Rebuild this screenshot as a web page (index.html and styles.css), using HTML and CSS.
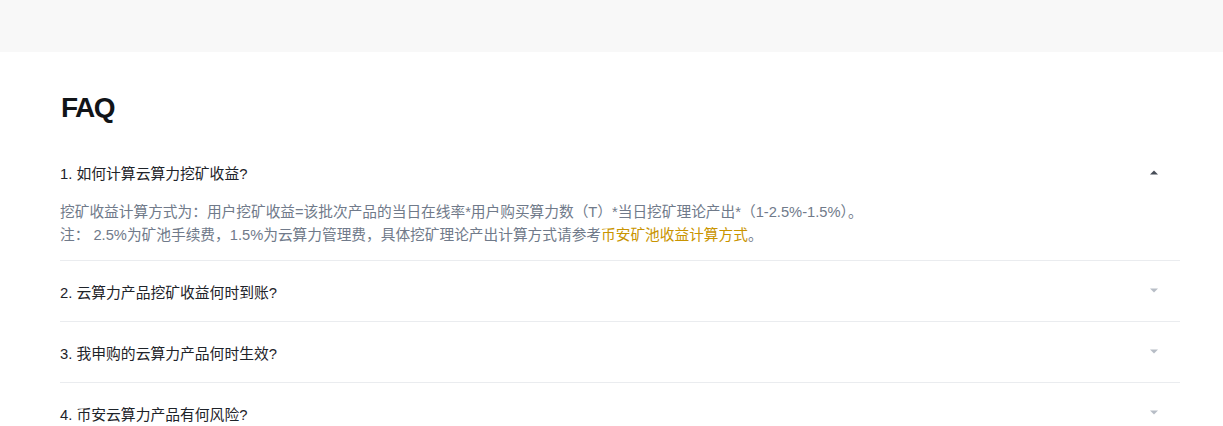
FILE: index.html
```html
<!DOCTYPE html>
<html lang="zh-CN">
<head>
  <meta charset="UTF-8">
  <title>FAQ</title>
  <link rel="stylesheet" href="styles.css">
</head>
<body>

  <div class="top-band"></div>

  <main class="faq">
    <h1>FAQ</h1>

    <div class="faq-item open">
      <div class="faq-question">
        <span>1. 如何计算云算力挖矿收益?</span>
        <svg class="caret" width="10" height="6" viewBox="0 0 10 6"><path d="M1 5.5 L5 1.5 L9 5.5 Z" fill="#474d57"/></svg>
      </div>
      <div class="faq-answer">
        <p>挖矿收益计算方式为：用户挖矿收益=该批次产品的当日在线率*用户购买算力数（T）*当日挖矿理论产出*（1-2.5%-1.5%）。</p>
        <p>注： 2.5%为矿池手续费，1.5%为云算力管理费，具体挖矿理论产出计算方式请参考<a href="#">币安矿池收益计算方式</a>。</p>
      </div>
    </div>

    <div class="faq-item">
      <div class="faq-question">
        <span>2. 云算力产品挖矿收益何时到账?</span>
        <svg class="caret" width="10" height="6" viewBox="0 0 10 6"><path d="M1 0.5 L5 4.5 L9 0.5 Z" fill="#b7bdc6"/></svg>
      </div>
    </div>

    <div class="faq-item">
      <div class="faq-question">
        <span>3. 我申购的云算力产品何时生效?</span>
        <svg class="caret" width="10" height="6" viewBox="0 0 10 6"><path d="M1 0.5 L5 4.5 L9 0.5 Z" fill="#b7bdc6"/></svg>
      </div>
    </div>

    <div class="faq-item">
      <div class="faq-question">
        <span>4. 币安云算力产品有何风险?</span>
        <svg class="caret" width="10" height="6" viewBox="0 0 10 6"><path d="M1 0.5 L5 4.5 L9 0.5 Z" fill="#b7bdc6"/></svg>
      </div>
    </div>
  </main>

</body>
</html>
```

FILE: styles.css
```css
* {
  box-sizing: border-box;
}

body {
  font-family: "Liberation Sans", "Noto Sans CJK SC", sans-serif;
  background-color: #ffffff;
  margin: 0;
  padding: 0;
  overflow: hidden;
}

.top-band {
  height: 52px;
  background-color: #f8f8f8;
}

.faq {
  width: 1120px;
  margin-left: 60px;
  padding-top: 38px;
}

h1 {
  font-size: 28px;
  line-height: 36px;
  font-weight: bold;
  letter-spacing: -1.5px;
  color: #111418;
  margin: 0 0 16px 1px;
}

.faq-item {
  border-bottom: 1px solid #eaecef;
}

.faq-question {
  height: 60px;
  display: flex;
  justify-content: space-between;
  align-items: center;
  padding-right: 21px;
  font-size: 14.8px;
  color: #1e2329;
}

.faq-answer {
  margin-top: -1px;
  padding-bottom: 13px;
  font-size: 14.7px;
  line-height: 23px;
  color: #707a8a;
}

.faq-answer p {
  margin: 0;
}

.faq-answer a {
  color: #c99400;
  text-decoration: none;
}
```
